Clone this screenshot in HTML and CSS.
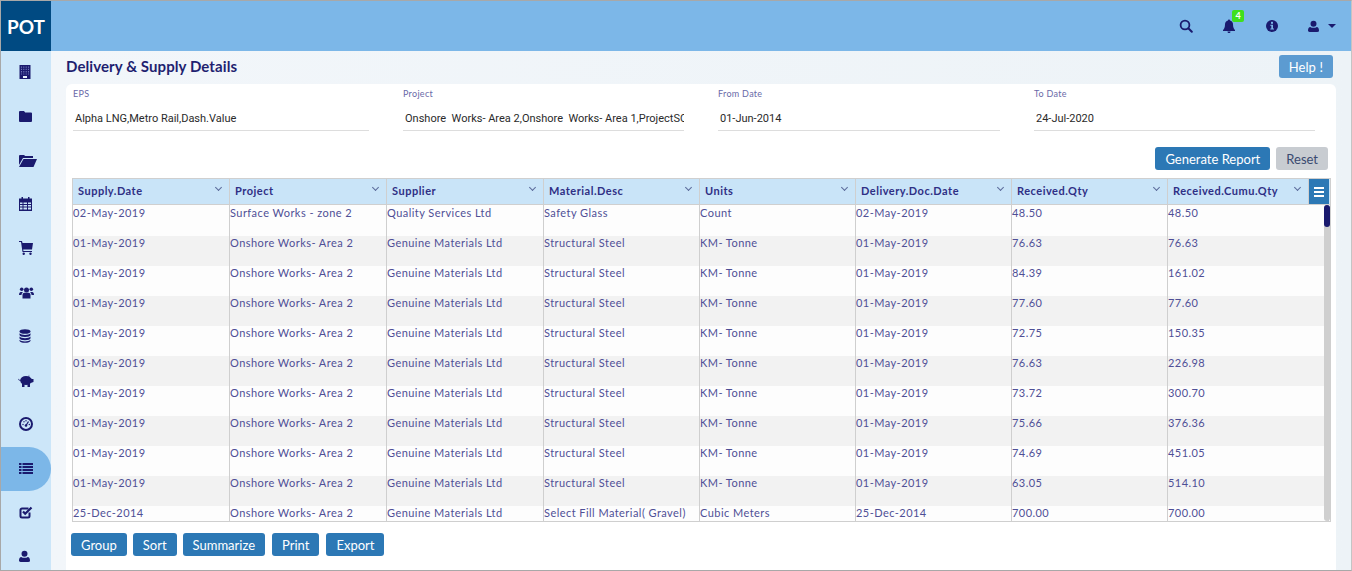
FILE: index.html
```html
<!DOCTYPE html>
<html lang="en">
<head>
  <meta charset="UTF-8" />
  <title>Delivery &amp; Supply Details</title>
  <link rel="stylesheet" href="styles.css">
</head>
<body>
  <div class="frame">
    <header class="topbar">
      <div class="logo">POT</div>
      <div class="top-icons">
        <svg class="top-icon" viewBox="0 0 14 14"><circle cx="6" cy="6" r="4.400" fill="none" stroke="#1a1a6e" stroke-width="1.800"/><path d="M9.300 9.300l3.500 3.500" stroke="#1a1a6e" stroke-width="2" stroke-linecap="round"/></svg>
        <div class="bell">
          <svg class="top-icon" viewBox="0 0 14 14"><path d="M7 0.500c.6 0 1 .4 1 1 2 .4 3 2 3 4 0 3 1 4.500 2 5.500v1H1v-1c1-1 2-2.500 2-5.500 0-2 1-3.600 3-4 0-.6.4-1 1-1z" fill="#1a1a6e"/><path d="M5.500 12.600h3a1.500 1.500 0 0 1-3 0z" fill="#1a1a6e"/></svg>
          <span class="badge">4</span>
        </div>
        <svg class="top-icon" viewBox="0 0 14 14"><circle cx="7" cy="7" r="6" fill="#1a1a6e"/><rect x="6" y="2.800" width="2" height="2" fill="#7cb7e8"/><path d="M5.300 5.800H8v3.600h1v1H5.300v-1h1V6.800h-1z" fill="#7cb7e8"/></svg>
        <div class="user-menu">
          <svg width="11" height="13" viewBox="0 0 14 15"><circle cx="7" cy="4" r="3.800" fill="#1a1a6e"/><path d="M2 14.500c-1 0-2-.5-2-1.500 0-3 1-5 3-5 1 .8 2.700 1.200 4 1.200s3-.4 4-1.200c2 0 3 2 3 5 0 1-1 1.500-2 1.500z" fill="#1a1a6e"/></svg>
          <span class="caret"></span>
        </div>
      </div>
    </header>

    <div class="page">
      <nav class="sidebar">
        <a class="nav-item"><svg width="12" height="14" viewBox="0 0 12 14"><rect x="0.500" width="11" height="14" fill="#1a1a6e"/><path stroke="#6f76b8" stroke-width="1.100" stroke-dasharray="1.300 1" d="M2.500 1.500v8M4.800 1.500v8M7.200 1.500v8M9.500 1.500v8"/><rect x="4" y="11" width="4" height="2" fill="#e8f2fb"/></svg></a>
        <a class="nav-item"><svg width="13" height="11" viewBox="0 0 13 11"><path fill="#1a1a6e" d="M1 0h4l1.200 1.500H12a1 1 0 0 1 1 1V10a1 1 0 0 1-1 1H1a1 1 0 0 1-1-1V1a1 1 0 0 1 1-1z"/></svg></a>
        <a class="nav-item"><svg width="18" height="13" viewBox="0 0 18 13"><path fill="#1a1a6e" d="M0 11V2a1 1 0 0 1 1-1h4l1.200 1H14v2H4L0 11zM4.500 5H18l-3.500 8H0z"/></svg></a>
        <a class="nav-item"><svg width="13" height="14" viewBox="0 0 13 14"><path fill="#1a1a6e" fill-rule="evenodd" d="M2.500 0h1.500v1.500h5V0h1.500v1.500H13V14H0V1.500h2.500zM1 5.500V7h2.500V5.500zM4.500 5.500V7h3.500V5.500zM9 5.500V7h3V5.500zM1 8v1.500h2.500V8zM4.500 8v1.500h3.500V8zM9 8v1.500h3V8zM1 10.500V12.500h2.500v-2zM4.500 10.500V12.500h3.500v-2zM9 10.500V12.500h3v-2z"/></svg></a>
        <a class="nav-item"><svg width="14" height="14" viewBox="0 0 14 14"><path fill="#1a1a6e" d="M3.500 2H14l-1 6.500H4.200l.2 1.500H13v1H3.500L2 1H0V0h3z"/><circle cx="4.700" cy="12.800" r="1.200" fill="#1a1a6e"/><circle cx="11.500" cy="12.800" r="1.200" fill="#1a1a6e"/></svg></a>
        <a class="nav-item"><svg width="15" height="13" viewBox="0 0 15 12"><g fill="#1a1a6e"><circle cx="7.500" cy="3.500" r="2.500"/><circle cx="2.700" cy="2.800" r="1.800"/><circle cx="12.300" cy="2.800" r="1.800"/><path d="M3.500 12V8.500c0-1.500 1-2.300 2-2.300h4c1 0 2 .8 2 2.300V12zM0 8.500C0 6 1 5.500 3 5.500c.4.300.7.500.9.600-.9.500-1.400 1.400-1.400 2.400zM15 8.500c0-2.500-1-3-3-3-.4.300-.7.500-.9.600.9.500 1.400 1.400 1.400 2.400z"/></g></svg></a>
        <a class="nav-item"><svg width="12" height="14" viewBox="0 0 12 14"><g fill="#1a1a6e"><ellipse cx="6" cy="2.500" rx="5.500" ry="2.300"/><path d="M.5 4.200c1 1.200 3 1.700 5.500 1.700s4.500-.5 5.500-1.700v1.800C11.500 7.200 9 8 6 8S.5 7.200.5 6zM.5 7.500C1.500 8.700 3.500 9.200 6 9.200s4.500-.5 5.500-1.700v1.800c0 1.200-2.500 2-5.500 2s-5.500-.8-5.500-2zM.5 10.700c1 1.200 3 1.700 5.500 1.700s4.500-.5 5.500-1.700v1c0 1.200-2.500 2.100-5.500 2.100S.5 12.900.5 11.700z"/></g></svg></a>
        <a class="nav-item nav-pig"><svg width="17" height="13" viewBox="0 0 17 13"><g fill="#1a1a6e"><ellipse cx="8" cy="6.500" rx="5.800" ry="4.500"/><path d="M11 .5l.5 3.500 2.500 1h1.500v3l-3 1-2-6zM0 4.500c.5 1 1.300 1.500 2.800 1.300v.9C1 7 0 6 0 4.500zM4 9h2.500v4H4zM9.500 9H12v4H9.500z"/></g></svg></a>
        <a class="nav-item"><svg width="14" height="14" viewBox="0 0 14 14"><circle cx="7" cy="7" r="6" fill="none" stroke="#1a1a6e" stroke-width="2"/><path d="M7 8.500L9.500 4.500" stroke="#1a1a6e" stroke-width="1.300"/><g fill="#1a1a6e"><circle cx="7" cy="8.500" r="1.300"/><circle cx="4" cy="7.500" r=".7"/><circle cx="10.300" cy="7.500" r=".7"/><circle cx="5" cy="4.800" r=".7"/><circle cx="7" cy="3.800" r=".7"/></g></svg></a>
        <a class="nav-item active"><svg width="14" height="11" viewBox="0 0 14 11"><path fill="#1a1a6e" d="M0 0h2.500v2H0zM3.500 0H14v2H3.500zM0 3h2.500v2H0zM3.500 3H14v2H3.500zM0 6h2.500v2H0zM3.500 6H14v2H3.500zM0 9h2.500v2H0zM3.500 9H14v2H3.500z"/></svg></a>
        <a class="nav-item"><svg width="14" height="13" viewBox="0 0 14 13"><path d="M10.500 6.500V10a1.500 1.500 0 0 1-1.500 1.500H3A1.500 1.500 0 0 1 1.500 10V4A1.500 1.500 0 0 1 3 2.500h6.500" fill="none" stroke="#1a1a6e" stroke-width="2"/><path d="M4 5.500l2.200 2.300L12.500 1.500" fill="none" stroke="#1a1a6e" stroke-width="2.200"/></svg></a>
        <a class="nav-item"><svg width="11" height="13" viewBox="0 0 14 15"><circle cx="7" cy="4" r="3.800" fill="#1a1a6e"/><path d="M2 14.500c-1 0-2-.5-2-1.500 0-3 1-5 3-5 1 .8 2.700 1.200 4 1.200s3-.4 4-1.200c2 0 3 2 3 5 0 1-1 1.500-2 1.500z" fill="#1a1a6e"/></svg></a>
      </nav>

      <main class="content">
        <div class="title-row">
          <h1>Delivery &amp; Supply Details</h1>
          <button class="btn btn-help">Help !</button>
        </div>
        <section class="card">
          <div class="filters">
            <div class="field"><label>EPS</label><div class="value">Alpha LNG,Metro Rail,Dash.Value</div></div>
            <div class="field"><label>Project</label><div class="value value-clip">Onshore&nbsp; Works- Area 2,Onshore&nbsp; Works- Area 1,ProjectSOW</div></div>
            <div class="field"><label>From Date</label><div class="value">01-Jun-2014</div></div>
            <div class="field"><label>To Date</label><div class="value">24-Jul-2020</div></div>
          </div>
          <div class="actions">
            <button class="btn">Generate Report</button>
            <button class="btn btn-grey">Reset</button>
          </div>
          <div class="grid">
            <div class="grid-head">
              <div class="hcell">Supply.Date</div>
              <div class="hcell">Project</div>
              <div class="hcell">Supplier</div>
              <div class="hcell">Material.Desc</div>
              <div class="hcell">Units</div>
              <div class="hcell">Delivery.Doc.Date</div>
              <div class="hcell">Received.Qty</div>
              <div class="hcell">Received.Cumu.Qty</div>
              <div class="grid-menu"><span></span><span></span><span></span></div>
            </div>
            <div class="grid-body" id="gridBody"></div>
            <div class="scrollbar"><div class="thumb"></div></div>
          </div>
          <div class="footer-btns">
            <button class="btn">Group</button>
            <button class="btn">Sort</button>
            <button class="btn">Summarize</button>
            <button class="btn">Print</button>
            <button class="btn">Export</button>
          </div>
        </section>
      </main>
    </div>
  </div>

  <script>
    const steel = ["Onshore Works- Area 2", "Genuine Materials Ltd", "Structural Steel", "KM- Tonne"];
    const rows = [
      ["02-May-2019", "Surface Works - zone 2", "Quality Services Ltd", "Safety Glass", "Count", "02-May-2019", "48.50", "48.50"],
      ["01-May-2019", ...steel, "01-May-2019", "76.63", "76.63"],
      ["01-May-2019", ...steel, "01-May-2019", "84.39", "161.02"],
      ["01-May-2019", ...steel, "01-May-2019", "77.60", "77.60"],
      ["01-May-2019", ...steel, "01-May-2019", "72.75", "150.35"],
      ["01-May-2019", ...steel, "01-May-2019", "76.63", "226.98"],
      ["01-May-2019", ...steel, "01-May-2019", "73.72", "300.70"],
      ["01-May-2019", ...steel, "01-May-2019", "75.66", "376.36"],
      ["01-May-2019", ...steel, "01-May-2019", "74.69", "451.05"],
      ["01-May-2019", ...steel, "01-May-2019", "63.05", "514.10"],
      ["25-Dec-2014", "Onshore Works- Area 2", "Genuine Materials Ltd", "Select Fill Material( Gravel)", "Cubic Meters", "25-Dec-2014", "700.00", "700.00"]
    ];
    const body = document.getElementById("gridBody");
    rows.forEach(r => {
      const row = document.createElement("div");
      row.className = "row";
      r.forEach(text => {
        const cell = document.createElement("div");
        cell.className = "cell";
        cell.textContent = text;
        row.appendChild(cell);
      });
      body.appendChild(row);
    });
  </script>
</body>
</html>
```

FILE: styles.css
```css
* {
  box-sizing: border-box;
}
html, body {
  margin: 0;
  height: 100%;
  overflow: hidden;
}
body {
  font-family: Lato, Arial, sans-serif;
  color: #1a1a6e;
}
.frame {
  width: 1352px;
  height: 571px;
  border: 1px solid #a8a8a8;
  border-right-color: #c4c4c4;
  display: flex;
  flex-direction: column;
  overflow: hidden;
}
.topbar {
  height: 50px;
  flex: none;
  background: #7cb7e8;
  display: flex;
  justify-content: space-between;
}
.logo {
  width: 50px;
  background: #004a82;
  color: #fff;
  font-size: 19px;
  font-weight: 700;
  display: flex;
  align-items: center;
  justify-content: center;
}
.top-icons {
  display: flex;
  align-items: center;
  padding: 0 15px 0 0;
  gap: 24px;
}
.top-icon {
  width: 14px;
  height: 14px;
  display: block;
}
.bell {
  position: relative;
  margin-left: 5px;
  margin-right: 5px;
}
.badge {
  position: absolute;
  top: -9px;
  left: 10px;
  width: 12px;
  height: 12px;
  border-radius: 2px;
  background: #3fe01c;
  color: #fff;
  font-size: 9px;
  font-weight: 700;
  line-height: 12px;
  text-align: center;
}
.user-menu {
  display: flex;
  align-items: center;
  gap: 9px;
  margin-left: 5px;
}
.caret {
  width: 0;
  height: 0;
  border-left: 4px solid transparent;
  border-right: 4px solid transparent;
  border-top: 4px solid #1a1a6e;
}
.page {
  flex: 1;
  display: flex;
  min-height: 0;
}
.sidebar {
  width: 50px;
  flex: none;
  background: #cce6f9;
  display: flex;
  flex-direction: column;
}
.nav-item {
  height: 44px;
  flex: none;
  display: flex;
  align-items: center;
  padding: 0 0 2px 18px;
}
.nav-item svg {
  display: block;
}
.nav-pig {
  padding-left: 17px;
}
.nav-item.active {
  background: #7cb7e8;
  border-radius: 0 22px 22px 0;
}
.content {
  flex: 1;
  min-width: 0;
  background: linear-gradient(90deg, #f2f6fa, #edf3f7);
  padding: 0 15px;
  display: flex;
  flex-direction: column;
}
.title-row {
  height: 33px;
  flex: none;
  display: flex;
  justify-content: space-between;
  align-items: center;
  padding: 0 3px 2px 0;
}
h1 {
  margin: 0 0 2px;
  font-size: 15px;
  font-weight: 700;
  letter-spacing: 0.09px;
  color: #1f1f70;
}
.btn {
  height: 23px;
  border: none;
  border-radius: 3px;
  background: #2c78b5;
  color: #fff;
  font-family: Lato, Arial, sans-serif;
  font-size: 13px;
  padding: 0 10px;
}
.btn-help {
  background: #5c9bd1;
  letter-spacing: 0.1px;
}
.btn-grey {
  background: #c8ccd1;
  color: #3a4a70;
}
.card {
  flex: 1;
  background: #fff;
  border-radius: 6px 6px 0 0;
  padding: 0 5px 0 6px;
  display: flex;
  flex-direction: column;
  min-height: 0;
}
.filters {
  display: flex;
  height: 47px;
  padding-top: 5px;
  flex: none;
}
.field {
  width: 315px;
  padding-right: 34px;
  flex: none;
}
.field:nth-child(1) {
  width: 331px;
  padding-left: 1px;
  padding-right: 34px;
}
.field:nth-child(3) {
  width: 316px;
}
.field label {
  display: block;
  font-size: 9px;
  line-height: 10px;
  letter-spacing: 0.3px;
  color: #6a6aa8;
}
.value {
  margin-top: 8px;
  height: 24px;
  line-height: 24px;
  padding-left: 2px;
  border-bottom: 1px solid #ddd;
  font-family: Roboto, Arial, sans-serif;
  font-size: 11px;
  color: #2a2a2a;
  white-space: nowrap;
  overflow: hidden;
}
.actions {
  flex: none;
  margin-top: 16px;
  display: flex;
  justify-content: flex-end;
  gap: 6px;
  padding-right: 3px;
}
.grid {
  position: relative;
  flex: none;
  margin-top: 8px;
  height: 344px;
  width: 1259px;
  border: 1px solid #cfcfcf;
  overflow: hidden;
}
.grid-head {
  height: 26px;
  background: #c9e4f8;
  display: grid;
  grid-template-columns: 157px 157px 157px 156px 156px 156px 156px 141px 20px;
  border-bottom: 1px solid #cfcfcf;
}
.hcell {
  position: relative;
  font-size: 11px;
  font-weight: 700;
  letter-spacing: 0.5px;
  line-height: 23px;
  padding-left: 5px;
  color: #2f2f85;
  border-right: 1px solid #cfcfcf;
}
.hcell::after {
  content: "";
  position: absolute;
  right: 8px;
  top: 6px;
  width: 4px;
  height: 4px;
  border-right: 1px solid #5a6a9a;
  border-bottom: 1px solid #5a6a9a;
  transform: rotate(45deg);
}
.grid-menu {
  background: #2c78b5;
  display: flex;
  flex-direction: column;
  align-items: center;
  justify-content: center;
  gap: 2px;
}
.grid-menu span {
  width: 10px;
  height: 2px;
  background: #fff;
}
.grid-body {
  height: 316px;
  overflow: hidden;
}
.row {
  height: 30px;
  display: grid;
  grid-template-columns: 157px 157px 157px 156px 156px 156px 156px 161px;
}
.row:nth-child(odd) {
  background: #fdfdfd;
}
.row:nth-child(even) {
  background: #f2f2f2;
}
.row:first-child {
  height: 31px;
}
.row:first-child .cell {
  padding-top: 1px;
}
.cell {
  font-size: 11px;
  letter-spacing: 0.45px;
  line-height: 14px;
  color: #4f4f96;
  border-right: 1px solid #cfcfcf;
  white-space: nowrap;
  overflow: hidden;
}
.scrollbar {
  position: absolute;
  right: 0;
  top: 26px;
  bottom: 0;
  width: 6px;
  background: #cfcfcf;
  border-radius: 3px;
}
.thumb {
  height: 22px;
  background: #1a1a6e;
  border-radius: 3px;
}
.footer-btns {
  flex: none;
  margin-top: 11px;
  display: flex;
  gap: 6px;
  margin-left: -1px;
}
.footer-btns .btn:nth-child(n+4) {
  margin-left: 1px;
}
```
